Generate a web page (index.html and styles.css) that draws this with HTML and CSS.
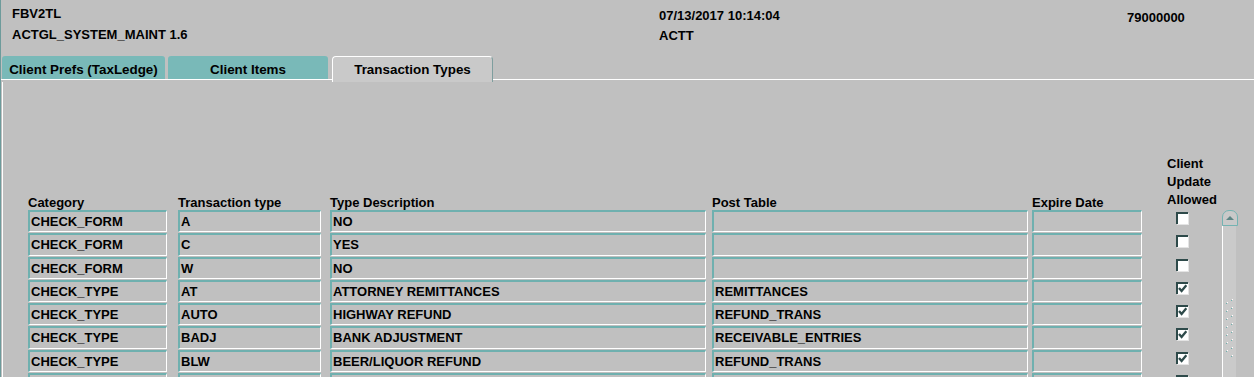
FILE: index.html
```html
<!DOCTYPE html>
<html lang="en">
<head>
    <meta charset="UTF-8">
    <title>ACTGL_SYSTEM_MAINT</title>
    <link rel="stylesheet" href="styles.css">
</head>
<body>

<div class="top">
    <div class="top-left">
        <div>FBV2TL</div>
        <div>ACTGL_SYSTEM_MAINT 1.6</div>
    </div>
    <div class="top-mid">
        <div>07/13/2017 10:14:04</div>
        <div>ACTT</div>
    </div>
    <div class="top-right">
        <div>79000000</div>
    </div>
</div>

<div class="tabs">
    <div class="tab tab-prefs">Client Prefs (TaxLedge)</div>
    <div class="tab tab-items">Client Items</div>
    <div class="tab tab-active">Transaction Types</div>
</div>

<div class="panel">
    <div class="cols head">
        <div>Category</div>
        <div>Transaction type</div>
        <div>Type Description</div>
        <div>Post Table</div>
        <div>Expire Date</div>
        <div class="head-client">Client<br>Update<br>Allowed</div>
    </div>

    <div class="table-body">
        <div class="rows">
            <div class="cols row">
                <div class="field f-cat">CHECK_FORM</div>
                <div class="field f-type">A</div>
                <div class="field f-desc">NO</div>
                <div class="field f-post"></div>
                <div class="field f-exp"></div>
                <div class="check"></div>
            </div>
            <div class="cols row">
                <div class="field f-cat">CHECK_FORM</div>
                <div class="field f-type">C</div>
                <div class="field f-desc">YES</div>
                <div class="field f-post"></div>
                <div class="field f-exp"></div>
                <div class="check"></div>
            </div>
            <div class="cols row">
                <div class="field f-cat">CHECK_FORM</div>
                <div class="field f-type">W</div>
                <div class="field f-desc">NO</div>
                <div class="field f-post"></div>
                <div class="field f-exp"></div>
                <div class="check"></div>
            </div>
            <div class="cols row">
                <div class="field f-cat">CHECK_TYPE</div>
                <div class="field f-type">AT</div>
                <div class="field f-desc">ATTORNEY REMITTANCES</div>
                <div class="field f-post">REMITTANCES</div>
                <div class="field f-exp"></div>
                <div class="check"><svg viewBox="0 0 9 9" width="9" height="9"><path d="M1 4 L3.6 7 L8.4 1.2" /></svg></div>
            </div>
            <div class="cols row">
                <div class="field f-cat">CHECK_TYPE</div>
                <div class="field f-type">AUTO</div>
                <div class="field f-desc">HIGHWAY REFUND</div>
                <div class="field f-post">REFUND_TRANS</div>
                <div class="field f-exp"></div>
                <div class="check"><svg viewBox="0 0 9 9" width="9" height="9"><path d="M1 4 L3.6 7 L8.4 1.2" /></svg></div>
            </div>
            <div class="cols row">
                <div class="field f-cat">CHECK_TYPE</div>
                <div class="field f-type">BADJ</div>
                <div class="field f-desc">BANK ADJUSTMENT</div>
                <div class="field f-post">RECEIVABLE_ENTRIES</div>
                <div class="field f-exp"></div>
                <div class="check"><svg viewBox="0 0 9 9" width="9" height="9"><path d="M1 4 L3.6 7 L8.4 1.2" /></svg></div>
            </div>
            <div class="cols row">
                <div class="field f-cat">CHECK_TYPE</div>
                <div class="field f-type">BLW</div>
                <div class="field f-desc">BEER/LIQUOR REFUND</div>
                <div class="field f-post">REFUND_TRANS</div>
                <div class="field f-exp"></div>
                <div class="check"><svg viewBox="0 0 9 9" width="9" height="9"><path d="M1 4 L3.6 7 L8.4 1.2" /></svg></div>
            </div>
            <div class="cols row">
                <div class="field f-cat"></div>
                <div class="field f-type"></div>
                <div class="field f-desc"></div>
                <div class="field f-post"></div>
                <div class="field f-exp"></div>
                <div class="check"></div>
            </div>
        </div>

        <div class="scrollbar">
            <div class="scroll-cap"><div class="scroll-arrow"></div></div>
            <div class="scroll-track">
                <svg class="grip" width="13" height="58" viewBox="0 0 13 58">
                    <defs>
                        <pattern id="dots" patternUnits="userSpaceOnUse" width="13" height="8">
                            <rect x="9" y="0" width="1" height="1" fill="#ffffff" />
                            <rect x="8" y="1" width="1" height="1" fill="#6fb0af" />
                            <rect x="4" y="3" width="1" height="1" fill="#ffffff" />
                            <rect x="3" y="4" width="1" height="1" fill="#6fb0af" />
                        </pattern>
                    </defs>
                    <rect x="0" y="0" width="13" height="58" fill="url(#dots)" />
                </svg>
            </div>
        </div>
    </div>
</div>

</body>
</html>
```

FILE: styles.css
```css
body {
    font-family: "Liberation Sans", Arial, sans-serif;
    font-size: 13px;
    font-weight: bold;
    color: #000;
    background-color: #c0c0c0;
    margin: 0;
    height: 100vh;
    overflow: hidden;
    border-left: 1px solid #6d9b9b;
}

/* cabecera */
.top {
    display: grid;
    grid-template-columns: 647px 468px 1fr;
    height: 56px;
    padding-left: 11px;
    box-sizing: border-box;
}
.top-left {
    padding-top: 3px;
    line-height: 21px;
}
.top-mid {
    padding-top: 6px;
    line-height: 20px;
}
.top-right {
    padding-top: 8px;
    line-height: 20px;
}

/* pestañas */
.tabs {
    display: flex;
    align-items: flex-start;
    height: 26px;
    padding-left: 1px;
    background: linear-gradient(to bottom, transparent 23px, #fff 23px, #fff 24px, transparent 24px);
}
.tab {
    height: 23px;
    box-sizing: border-box;
    padding-top: 3px;
    line-height: 21px;
    text-align: center;
    white-space: nowrap;
    font-size: 13.4px;
}
.tab-prefs, .tab-items {
    background-color: #79b9b8;
    border-radius: 3px 3px 0 0;
}
.tab-prefs {
    width: 163px;
    margin-right: 3px;
}
.tab-items {
    width: 160px;
    margin-right: 4px;
}
.tab-active {
    width: 161px;
    height: 26px;
    padding-top: 2px;
    background-color: #c9c9c9;
    border-top: 1px solid #fff;
    border-left: 1px solid #fff;
    border-right: 1px solid #7e9e9e;
    border-radius: 4px 4px 0 0;
}

/* panel */
.panel {
    margin-left: 1px;
    border-left: 1px solid #fff;
    padding-left: 25px;
    height: calc(100vh - 82px);
    overflow: hidden;
}
.cols {
    display: grid;
    grid-template-columns: 150px 152px 382px 320px 135px 55px;
}
.head {
    height: 128px;
    align-items: end;
    line-height: 15px;
}
.head-client {
    line-height: 18px;
    margin-bottom: 1px;
}

.table-body {
    display: flex;
    align-items: flex-start;
}
.rows {
    width: 1194px;
}
.row {
    height: 23.3px;
    align-items: start;
}
.field {
    height: 22.3px;
    box-sizing: border-box;
    border-top: 2px solid #6fb0af;
    border-left: 2px solid #6fb0af;
    border-right: 1px solid #fff;
    border-bottom: 1px solid #fff;
    padding-left: 1px;
    line-height: 19px;
    white-space: nowrap;
    overflow: hidden;
}
.f-cat { width: 139px; }
.f-type { width: 143px; }
.f-desc { width: 376px; }
.f-post { width: 316px; }
.f-exp { width: 110px; }

.check {
    width: 12px;
    height: 12px;
    box-sizing: border-box;
    margin: 2px 0 0 9px;
    background-color: #fff;
    border-top: 2px solid #2e4a4a;
    border-left: 2px solid #2e4a4a;
    box-shadow: 1px 1px 0 #e4e4e4;
}
.check svg {
    display: block;
}
.check path {
    fill: none;
    stroke: #2e4a4a;
    stroke-width: 2.4;
}

/* barra de desplazamiento */
.scrollbar {
    width: 16px;
    height: 170px;
    display: flex;
    flex-direction: column;
}
.scroll-cap {
    height: 16px;
    box-sizing: border-box;
    border: 1px solid #74b3b2;
    border-radius: 7px 7px 0 0;
    background-color: #c9c9c9;
}
.scroll-arrow {
    width: 0;
    height: 0;
    margin: 5px auto 0;
    border-left: 4px solid transparent;
    border-right: 4px solid transparent;
    border-bottom: 4px solid #5e8585;
}
.scroll-track {
    flex: 1;
    width: 13px;
    border-left: 1px solid #fff;
    background-color: #cacaca;
}
.grip {
    display: block;
    margin-top: 73px;
}
```
